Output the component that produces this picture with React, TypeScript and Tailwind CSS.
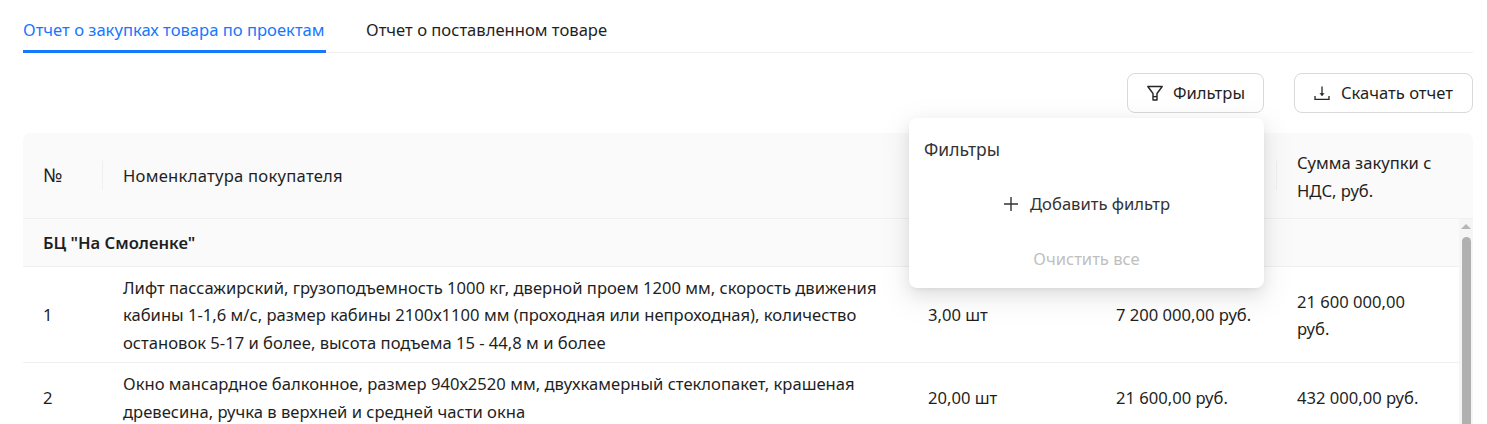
import React from "react";

const col = "shrink-0";

function FilterIcon() {
  return (
    <svg width="18" height="18" viewBox="0 0 18 18" fill="none" stroke="#262626" strokeWidth="1.4" strokeLinejoin="round">
      <path d="M1.8 2.5h14.4L11 9.5v6.5H7V9.5L1.8 2.5Z" />
      <path d="M7 12.6h4" />
    </svg>
  );
}

function DownloadIcon() {
  return (
    <svg width="16" height="16" viewBox="0 0 16 16" fill="none" stroke="#262626" strokeWidth="1.3">
      <path d="M1 11v3.4h14V11" />
      <path d="M8 1.5v9" />
      <path d="M5.4 8.2 8 11l2.6-2.8" fill="#262626" stroke="none" />
    </svg>
  );
}

function PlusIcon() {
  return (
    <svg width="16" height="16" viewBox="0 0 16 16" fill="none" stroke="#333" strokeWidth="1.4">
      <path d="M8 1v14M1 8h14" />
    </svg>
  );
}

function Row({ n, name, qty, price, sum, h }: { n: string; name: React.ReactNode; qty: string; price: string; sum: React.ReactNode; h: string }) {
  return (
    <div className={`flex items-center border-b border-[#f0f0f0] ${h}`}>
      <div className={`${col} w-[100px] pl-[20px]`}>{n}</div>
      <div className={`${col} w-[805px]`}>{name}</div>
      <div className={`${col} w-[188px]`}>{qty}</div>
      <div className={`${col} w-[181px]`}>{price}</div>
      <div className={`${col} w-[150px]`}>{sum}</div>
    </div>
  );
}

export default function App() {
  return (
    <div className="relative h-[424px] w-[1487px] overflow-hidden bg-white pl-[23px] pr-[14px] font-['Noto_Sans','Open_Sans',sans-serif] text-[16.6px] leading-[27.5px] text-[#1f1f1f]">
      <div className="flex h-[53px] items-end gap-[40px] border-b border-[#f0f0f0]">
        <div className="relative flex h-[52px] w-[303px] items-center pt-[8px] text-[#1677ff]">
          <span className="whitespace-nowrap">Отчет о закупках товара по проектам</span>
          <div className="absolute bottom-[-1px] left-0 h-[3px] w-full bg-[#1677ff]" />
        </div>
        <div className="flex h-[52px] items-center pt-[8px] whitespace-nowrap">Отчет о поставленном товаре</div>
      </div>

      <div className="mt-[20px] flex justify-end gap-[30px]">
        <button className="flex h-[40px] w-[137px] items-center justify-center gap-[9px] rounded-[8px] border border-[#d9d9d9] bg-white">
          <FilterIcon />
          <span>Фильтры</span>
        </button>
        <button className="flex h-[40px] w-[179px] items-center justify-center gap-[11px] rounded-[8px] border border-[#d9d9d9] bg-white">
          <DownloadIcon />
          <span>Скачать отчет</span>
        </button>
      </div>

      <div className="mt-[20px] w-[1450px]">
        <div className="flex h-[86px] items-center rounded-t-[8px] border-b border-[#f0f0f0] bg-[#fafafa]">
          <div className="flex h-[29px] w-[80px] items-center border-r border-[#f0f0f0] pl-[20px] text-[19px]">№</div>
          <div className="ml-[20px] w-[805px] tracking-[0.26px]">Номенклатура покупателя</div>
          <div className="w-[188px]" />
          <div className="h-[29px] w-[161px] border-r border-[#f0f0f0]" />
          <div className="ml-[20px] w-[155px] pt-[2px]">Сумма закупки с НДС, руб.</div>
        </div>

        <div className="flex">
          <div className="w-[1436px] shrink-0">
            <div className="flex h-[48px] items-center border-b border-[#f0f0f0] bg-[#fafafa] pl-[20px] pt-[1px] font-semibold">БЦ "На Смоленке"</div>
            <Row
              h="h-[96px] pt-[1px]"
              n="1"
              name={
                <>
                  Лифт пассажирский, грузоподъемность 1000 кг, дверной проем 1200 мм, скорость движения
                  <br />
                  кабины 1-1,6 м/с, размер кабины 2100х1100 мм (проходная или непроходная), количество
                  <br />
                  остановок 5-17 и более, высота подъема 15 - 44,8 м и более
                </>
              }
              qty="3,00 шт"
              price="7 200 000,00 руб."
              sum={
                <>
                  21 600 000,00
                  <br />
                  руб.
                </>
              }
            />
            <Row
              h="h-[70px]"
              n="2"
              name={
                <>
                  Окно мансардное балконное, размер 940х2520 мм, двухкамерный стеклопакет, крашеная
                  <br />
                  древесина, ручка в верхней и средней части окна
                </>
              }
              qty="20,00 шт"
              price="21 600,00 руб."
              sum="432 000,00 руб."
            />
          </div>
          <div className="flex w-[14px] shrink-0 flex-col items-center bg-[#f5f5f5] pt-[5px]">
            <div className="h-0 w-0 border-x-[5px] border-b-[5px] border-x-transparent border-b-[#b5b5b5]" />
            <div className="mt-[8px] h-[300px] w-[9px] rounded-full bg-[#b0b0b0]" />
          </div>
        </div>
      </div>

      <div className="absolute left-[909px] top-[118px] flex h-[170px] w-[355px] flex-col items-center rounded-[8px] bg-white px-[15px] pt-[18px] shadow-[0_6px_16px_0_rgba(0,0,0,0.08),0_3px_6px_-4px_rgba(0,0,0,0.12),0_9px_28px_8px_rgba(0,0,0,0.05)]">
        <div className="h-[27px] w-full text-[17.5px] text-[#333]">Фильтры</div>
        <div className="mt-[27px] flex h-[27px] items-center gap-[11px] text-[#333]">
          <PlusIcon />
          <span>Добавить фильтр</span>
        </div>
        <div className="mt-[28px] text-[#bfbfbf]">Очистить все</div>
      </div>
    </div>
  );
}
